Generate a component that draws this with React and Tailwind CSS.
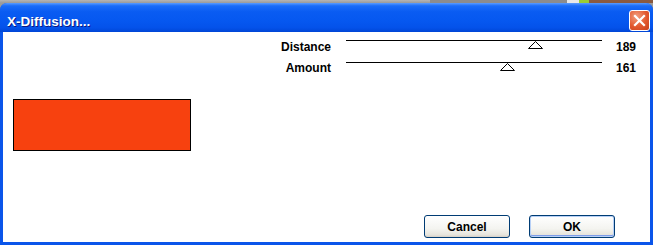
import React from "react";

const FONT = { fontFamily: '"Liberation Sans", Arial, sans-serif' };

function Slider({ label, value, labelShift = "mt-0" }) {
  const left = (value / 255) * 256 - 7.5;
  return (
    <div className="flex h-[22px] items-start">
      <div className={`w-[328px] text-right text-[12px] font-bold leading-[14px] text-black ${labelShift}`}>
        {label}
      </div>
      <div className="relative ml-[15px] h-[22px] w-[256px] border-t border-black">
        <svg
          className="absolute top-0"
          style={{ left }}
          width="15"
          height="8"
          viewBox="0 0 15 8"
        >
          <polygon points="0.5,7.5 7.5,0.5 14.5,7.5" fill="white" stroke="black" strokeWidth="1" />
        </svg>
      </div>
      <div className={`ml-[14px] text-[12px] font-bold leading-[14px] text-black ${labelShift}`}>{value}</div>
    </div>
  );
}

function XPButton({ children, def }) {
  return (
    <button
      className={`flex h-[23px] w-[86px] items-center justify-center rounded-[3px] border border-[#003c74] bg-[linear-gradient(180deg,#ffffff_0%,#f4f4f0_60%,#e6e4dc_90%,#d6d0c5_100%)] text-[12px] font-bold leading-[14px] text-black ${
        def ? "shadow-[inset_0_0_0_1px_#b7d0f6,inset_0_-1px_0_1px_#7d9ce9]" : ""
      }`}
    >
      {children}
    </button>
  );
}

export default function App() {
  return (
    <div className="flex h-[245px] w-[653px] flex-col bg-[#9b9b9b]" style={FONT}>
      <div className="flex h-[3px] w-full">
        <div className="h-full w-[430px] bg-[linear-gradient(180deg,#b5b5b5,#9a9a9a)]" />
        <div className="h-full w-[137px] bg-[#8c8c8c]" />
        <div className="h-full w-[12px] bg-[#e8e8e8]" />
        <div className="h-full w-[10px] bg-[#9acd32]" />
        <div className="h-full flex-1 bg-[#8a5a40]" />
      </div>
      <div className="flex flex-1 flex-col overflow-hidden rounded-t-[7px] bg-[#0a55ea]">
        <div className="flex h-[29px] items-start justify-between bg-[linear-gradient(180deg,#5a9cff_0%,#1a6cf8_10%,#0a5cf2_30%,#0658f0_60%,#0452ea_85%,#0046d6_100%)] pl-[7px] pr-[3px]">
          <div className="pt-[11px] text-[13.5px] font-bold leading-[15px] text-white [text-shadow:1px_1px_#0a1883]">
            X-Diffusion...
          </div>
          <div className="mt-[7px] flex h-[21px] w-[21px] items-center justify-center rounded-[3px] border border-white bg-[radial-gradient(circle_at_35%_30%,#f2a080_0%,#e2582e_55%,#c8401c_100%)]">
            <svg width="13" height="13" viewBox="0 0 13 13">
              <path d="M2 2 L11 11 M11 2 L2 11" stroke="white" strokeWidth="2.2" strokeLinecap="square" />
            </svg>
          </div>
        </div>
        <div className="flex flex-1 px-[3px] pb-[3px]">
          <div className="flex flex-1 flex-col bg-white pt-[8px]">
            <Slider label="Distance" value={189} />
            <Slider label="Amount" value={161} labelShift="-mt-[1px]" />
            <div className="ml-[10px] mt-[15px] h-[52px] w-[178px] border border-black bg-[#f7410f]" />
            <div className="mt-[64px] flex justify-end gap-[19px] pr-[35px]">
              <XPButton>Cancel</XPButton>
              <XPButton def>OK</XPButton>
            </div>
          </div>
        </div>
      </div>
    </div>
  );
}
